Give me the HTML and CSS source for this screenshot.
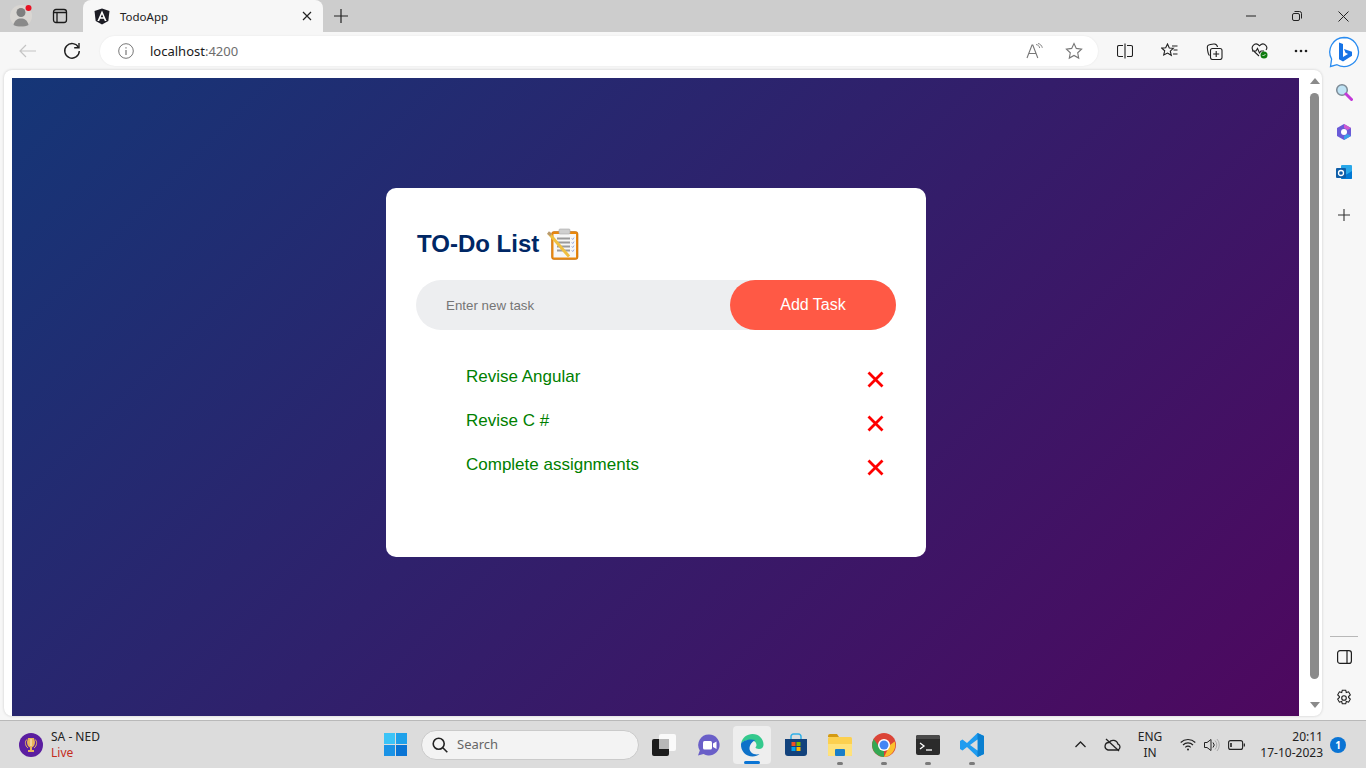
FILE: index.html
```html
<!DOCTYPE html>
<html>

<head>
	<meta charset="utf-8">
	<title>TodoApp</title>
	<link rel="stylesheet" href="styles.css">
</head>

<body>
	<!-- browser tabs -->
	<div class="tabBar">
		<div class="slot avatarSlot">
			<svg width="28" height="28" viewBox="0 0 28 28"><circle cx="13" cy="15" r="11" fill="#d9d6d2"/><circle cx="13" cy="11.500" r="4.500" fill="#7f7f7f"/><path d="M5.500 24c1-5 4-6.500 7.500-6.500s6.500 1.500 7.500 6.500c-4 2-11 2-15 0z" fill="#8a8a8a"/><circle cx="20.500" cy="7" r="3" fill="#e81123"/></svg>
		</div>
		<div class="slot tabsIcon">
			<svg width="16" height="16" viewBox="0 0 16 16" fill="none" stroke="#1a1a1a" stroke-width="1.300"><rect x="1.500" y="1.500" width="13" height="13" rx="2.500"/><path d="M1.500 4.500h13M5 4.500v10"/></svg>
		</div>
		<div class="tab">
			<svg class="tabLogo" width="16" height="17" viewBox="0 0 16 17"><path d="M8 .5 15.500 3l-1.200 10L8 16.500 1.700 13 .5 3z" fill="#1c1c24"/><path d="M8 2.500 3.400 13h1.800l.9-2.300h3.800l.9 2.300h1.800zM8 6.300l1.300 3H6.700z" fill="#fff"/></svg>
			<span class="tabTitle">TodoApp</span>
			<svg width="12" height="12" viewBox="0 0 12 12" stroke="#222" stroke-width="1.200"><path d="M2 2l8 8M10 2l-8 8"/></svg>
		</div>
		<div class="slot plusSlot">
			<svg width="14" height="14" viewBox="0 0 14 14" stroke="#222" stroke-width="1.200"><path d="M7 0v14M0 7h14"/></svg>
		</div>
		<div class="windowBtns">
			<div class="winBtn"><svg width="10" height="10" viewBox="0 0 10 10" stroke="#222"><path d="M0 5h10"/></svg></div>
			<div class="winBtn"><svg width="10" height="10" viewBox="0 0 10 10" fill="none" stroke="#222"><rect x=".5" y="2.500" width="7" height="7" rx="1.500"/><path d="M2.500 .5h5a2 2 0 0 1 2 2v5"/></svg></div>
			<div class="winBtn"><svg width="11" height="11" viewBox="0 0 11 11" stroke="#222"><path d="M.5 .5l10 10M10.500 .5l-10 10"/></svg></div>
		</div>
	</div>

	<!-- address bar -->
	<div class="toolBar">
		<div class="slot backSlot">
			<svg width="18" height="14" viewBox="0 0 18 14" fill="none" stroke="#c4c4c4" stroke-width="1.200"><path d="M1 7h16M7 1 1 7l6 6"/></svg>
		</div>
		<div class="slot refreshSlot">
			<svg width="18" height="18" viewBox="0 0 18 18" fill="none" stroke="#1f1f1f" stroke-width="1.400"><path d="M15.500 5.500A7.300 7.300 0 1 0 16.300 9"/><path d="M16 1v4.800h-4.800"/></svg>
		</div>
		<div class="addressPill">
			<svg class="infoIcon" width="16" height="16" viewBox="0 0 16 16" fill="none" stroke="#777"><circle cx="8" cy="8" r="7.300"/><path d="M8 7v5M8 4.200v1.300" stroke-width="1.200"/></svg>
			<span class="url">localhost<span class="urlPort">:4200</span></span>
			<div class="pillIcons">
				<svg width="17" height="16" viewBox="0 0 17 16" fill="none" stroke="#777" stroke-width="1.100"><path d="M1 15 6 2h.8l5 13M3 10.500h7"/><path d="M10 1.500c2 .3 3.300 1.500 3.700 3.500M12 .5c2.300.5 3.800 2 4.300 4.300" stroke-width=".9"/></svg>
				<svg width="18" height="18" viewBox="0 0 18 18" fill="none" stroke="#777" stroke-width="1.100"><path d="m9 1.500 2.300 4.900 5.300.7-3.900 3.700 1 5.300L9 13.500l-4.700 2.600 1-5.300-3.900-3.700 5.300-.7z"/></svg>
			</div>
		</div>
		<div class="toolIcons">
			<div class="toolIcon"><svg width="16" height="16" viewBox="0 0 16 16" fill="none" stroke="#1f1f1f" stroke-width="1.100"><path d="M6 2.500H2A1.500 1.500 0 0 0 .5 4v8A1.500 1.500 0 0 0 2 13.500h4M10 2.500h4A1.500 1.500 0 0 1 15.500 4v8a1.500 1.500 0 0 1-1.500 1.500h-4M8 .5v15"/></svg></div>
			<div class="toolIcon"><svg width="17" height="16" viewBox="0 0 17 16" fill="none" stroke="#1f1f1f" stroke-width="1.100"><path d="m6.500 1 1.800 4 4 .3-3 2.800 1 4.200-3.800-2.200L2.700 12l1-4.200-3-2.700 4-.4zM11 3h5.500M12.500 7H16.500M12 11h4.500"/></svg></div>
			<div class="toolIcon"><svg width="17" height="17" viewBox="0 0 17 17" fill="none" stroke="#1f1f1f" stroke-width="1.100"><path d="M3.500 12.500C1.800 11.500 1 4 1.500 3c.5-1.200 5-2.300 7-2 1.500.2 2.800 2 3 3"/><rect x="4.500" y="5.500" width="11.500" height="11" rx="2"/><path d="M10.200 8v6M7.200 11h6"/></svg></div>
			<div class="toolIcon"><svg width="18" height="18" viewBox="0 0 18 18"><path d="M8 14 2 8.300C-.5 5 3.500.5 7 2.500l1.500 1.300L10 2.500c3.500-2 7.500 2.500 5 5.500M1 9h4l1.500-2.500 2 4.500L10 9h3" fill="none" stroke="#1f1f1f" stroke-width="1.100"/><circle cx="13" cy="13" r="3.500" fill="#107c10"/><path d="m11.500 13 1 1 2-2" fill="none" stroke="#fff" stroke-width=".8"/></svg></div>
			<div class="toolIcon menuDots"><svg width="14" height="4" viewBox="0 0 14 4" fill="#1f1f1f"><circle cx="2" cy="2" r="1.300"/><circle cx="7" cy="2" r="1.300"/><circle cx="12" cy="2" r="1.300"/></svg></div>
			<div class="toolIcon bingIcon"><svg width="32" height="32" viewBox="0 0 32 32"><path d="M16 1.500a14.500 14.500 0 1 1-7 27.200L2.500 30.500 3.600 23A14.500 14.500 0 0 1 16 1.500z" fill="#fff" stroke="#2a8cf0" stroke-width="1.300"/><path d="M11 6.500l4 1.400v13l5-2.900-2.500-1.200-1.500-3.800 8 2.800v4L15 25.500l-4-2.200z" fill="#1673e6"/></svg></div>
		</div>
	</div>

	<div class="browserBody">
		<div class="viewport">
			<div class="page">
				<div class="card">
					<h2 class="cardTitle">TO-Do List
						<svg class="clipboard" width="32" height="32" viewBox="0 0 32 32">
							<rect x="4.500" y="3.500" width="26.500" height="28" rx="2.500" fill="#e8870e" stroke="#c0690a" stroke-width=".6"/>
							<rect x="6.500" y="6" width="22.500" height="23.500" fill="#f7f7f7"/>
							<rect x="12" y="1" width="11" height="5" rx="1" fill="#cfcfcf" stroke="#aaa" stroke-width=".6"/>
							<path d="M10 10.500h13M10 14.500h13M10 18.500h13M10 22.500h13" stroke="#9a9a9a" stroke-width="2"/>
							<path d="M24.500 10.500l1.500 1 1-2M24.500 14.500l1.500 1 1-2M24.500 18.500l1.500 1 1-2M24.500 22.500l1.500 1 1-2" fill="none" stroke="#8f9fd8" stroke-width=".8"/>
							<path d="M1.500 5 22 28.500" stroke="#f0c040" stroke-width="3"/>
							<path d="M1 4.500 4 7" stroke="#b89a70" stroke-width="3"/>
						</svg>
					</h2>
					<div class="inputRow">
						<input class="taskInput" type="text" placeholder="Enter new task">
						<button class="addBtn">Add Task</button>
					</div>
					<ul class="taskList">
						<li class="taskItem">
							<span class="taskText">Revise Angular</span>
							<svg class="delIcon" width="17" height="17" viewBox="0 0 17 17" stroke="#f00" stroke-width="2.800"><path d="M1.500 1.500l14 14M15.500 1.500l-14 14"/></svg>
						</li>
						<li class="taskItem">
							<span class="taskText">Revise C #</span>
							<svg class="delIcon" width="17" height="17" viewBox="0 0 17 17" stroke="#f00" stroke-width="2.800"><path d="M1.500 1.500l14 14M15.500 1.500l-14 14"/></svg>
						</li>
						<li class="taskItem">
							<span class="taskText">Complete assignments</span>
							<svg class="delIcon" width="17" height="17" viewBox="0 0 17 17" stroke="#f00" stroke-width="2.800"><path d="M1.500 1.500l14 14M15.500 1.500l-14 14"/></svg>
						</li>
					</ul>
				</div>
			</div>
			<div class="scrollBar">
				<div class="arrowUp"></div>
				<div class="thumb"></div>
				<div class="arrowDown"></div>
			</div>
		</div>

		<div class="sideBar">
			<div class="sideIcon"><svg width="18" height="18" viewBox="0 0 18 18"><circle cx="7" cy="7" r="5.300" fill="#bfe3f5" stroke="#7d8b96" stroke-width="1.500"/><path d="m11 11 5.500 5.500" stroke="#c239d8" stroke-width="3" stroke-linecap="round"/></svg></div>
			<div class="sideIcon"><svg width="18" height="18" viewBox="0 0 18 18"><path d="M9 1l7 4v8l-7 4-7-4V5z" fill="#6a5bd8"/><path d="M9 1l7 4-3.500 2L9 5z" fill="#d05ad0"/><path d="M16 13l-7 4v-4l3.500-2z" fill="#3ba0e8"/><circle cx="9" cy="9" r="3" fill="#fff"/></svg></div>
			<div class="sideIcon"><svg width="18" height="18" viewBox="0 0 18 18"><rect x="6" y="2" width="11" height="14" rx="1" fill="#28a8ea"/><path d="M6 8l5.500 3.500L17 8v7a1 1 0 0 1-1 1H7a1 1 0 0 1-1-1z" fill="#0078d4"/><rect x="1" y="5" width="10" height="10" rx="1" fill="#0f5ea8"/><circle cx="6" cy="10" r="2.500" fill="none" stroke="#fff" stroke-width="1.300"/></svg></div>
			<div class="sideIcon plusIcon"><svg width="14" height="14" viewBox="0 0 14 14" stroke="#333" stroke-width="1.100"><path d="M7 1v12M1 7h12"/></svg></div>
			<div class="sideBottom">
				<div class="sideRule"></div>
				<div class="sideIcon"><svg width="15" height="14" viewBox="0 0 15 14" fill="none" stroke="#1f1f1f" stroke-width="1.200"><rect x=".6" y=".6" width="13.800" height="12.800" rx="2.500"/><path d="M10 .6v12.800"/></svg></div>
				<div class="sideIcon"><svg width="18" height="18" viewBox="0 0 18 18" fill="none" stroke="#1f1f1f" stroke-width="1.100"><path d="M7.300 1.200h3.400l.6 2.300 2.300-.7 1.700 3-1.700 1.700v1l1.700 1.700-1.700 3-2.300-.7-.6 2.300H7.300l-.6-2.300-2.300.7-1.700-3 1.700-1.700v-1L2.700 5.800l1.700-3 2.300.7z"/><circle cx="9" cy="9" r="2.300"/></svg></div>
			</div>
		</div>
	</div>

	<!-- windows taskbar -->
	<div class="taskBar">
		<div class="weather">
			<svg width="24" height="24" viewBox="0 0 24 24"><circle cx="12" cy="12" r="12" fill="#5b1ea0"/><path d="M9 5h6l1 4c0 3-1.500 5-3 5.500V17h2v2H9v-2h2v-2.500C9.500 14 8 12 8 9z" fill="#e8b45a"/><path d="M8 6.500C5.500 8 6 13 9 15M16 6.500c2.500 1.500 2 6.500-1 8.500" fill="none" stroke="#e8b45a"/><path d="M12 6v7" stroke="#fff" stroke-width=".8"/></svg>
			<div class="weatherText">
				<div>SA - NED</div>
				<div class="liveText">Live</div>
			</div>
		</div>
		<div class="taskSlot">
			<svg width="23" height="23" viewBox="0 0 23 23"><rect width="11" height="11" fill="#3cc4f7"/><rect x="12" width="11" height="11" fill="#1fa1ea"/><rect y="12" width="11" height="11" fill="#1a93e6"/><rect x="12" y="12" width="11" height="11" fill="#0a74d4"/></svg>
		</div>
		<div class="searchBox">
			<svg width="16" height="16" viewBox="0 0 16 16" fill="none" stroke="#222" stroke-width="1.600"><circle cx="6.700" cy="6.700" r="5.500"/><path d="m10.800 10.800 4.500 4.500"/></svg>
			<span class="searchLabel">Search</span>
		</div>
		<div class="taskSlot">
			<svg width="24" height="22" viewBox="0 0 24 22"><rect x="7" y="0" width="17" height="17" rx="2" fill="#fafafa"/><rect x="0" y="5" width="17" height="17" rx="2" fill="#1c1c1c"/><rect x="7" y="5" width="10" height="10" fill="#b8b8b8"/></svg>
		</div>
		<div class="taskSlot">
			<svg width="24" height="24" viewBox="0 0 24 24"><path d="M13 1.500a10.500 10.500 0 1 1-5.500 19.400L2 22.500l1.800-5A10.500 10.500 0 0 1 13 1.500z" fill="#6a5fc8"/><rect x="7" y="8" width="9" height="8.500" rx="1.500" fill="#fff"/><path d="M17 10.500l3.500-2v7.500L17 14z" fill="#fff"/></svg>
		</div>
		<div class="taskSlot">
			<div class="activeTile">
				<svg width="24" height="24" viewBox="0 0 24 24"><path d="M1 11C2 4.500 7 1 12.500 1 19 1 23.500 6 23.500 11.500c0 3-2 4.500-4.500 4.500-2 0-3.500-.8-3.500-1.500 0-.5 1-1 1-2.500 0-3-3-5-6-5C6 7 1.500 9 1 11z" fill="#34c98d"/><path d="M1 11C.5 18 6 23.500 12.500 23.500c3 0 5.500-1 7-2.500-5 1.500-10-1.500-10-5.500 0-3.500 2.500-7 6-8.500C8 5 1.500 8.500 1 11z" fill="#0f72c9"/></svg>
				<div class="activeMark"></div>
			</div>
		</div>
		<div class="taskSlot">
			<svg width="24" height="24" viewBox="0 0 24 24"><path d="M7 6V3.500A2.500 2.500 0 0 1 9.500 1h5A2.500 2.500 0 0 1 17 3.500V6" fill="none" stroke="#30b0e8" stroke-width="1.500"/><path d="M1 6h22v14a3 3 0 0 1-3 3H4a3 3 0 0 1-3-3z" fill="#12427c"/><rect x="7.500" y="9" width="4" height="4" fill="#f25022"/><rect x="12.500" y="9" width="4" height="4" fill="#7fba00"/><rect x="7.500" y="14" width="4" height="4" fill="#00a4ef"/><rect x="12.500" y="14" width="4" height="4" fill="#ffb900"/></svg>
		</div>
		<div class="taskSlot">
			<svg width="24" height="22" viewBox="0 0 24 22"><path d="M0 2a2 2 0 0 1 2-2h7l2 3h-11z" fill="#d49a12"/><rect y="3" width="24" height="19" rx="1.500" fill="#fcd04f"/><path d="M0 10h24v10.500a1.500 1.500 0 0 1-1.500 1.500h-21A1.500 1.500 0 0 1 0 20.500z" fill="#ffe27a"/><rect x="7" y="15" width="10" height="7" rx="1" fill="#1a7fc8"/></svg>
			<div class="runDot"></div>
		</div>
		<div class="taskSlot">
			<svg width="24" height="24" viewBox="0 0 24 24"><circle cx="12" cy="12" r="12" fill="#db4437"/><path d="M12 24 18 12l4.700-3.600A12 12 0 0 1 12 24z" fill="#fbc02d"/><path d="M12 24A12 12 0 0 1 1.700 6L7 13.500 12 18z" fill="#34a853"/><circle cx="12" cy="12" r="6" fill="#fff"/><circle cx="12" cy="12" r="4.500" fill="#4285f4"/></svg>
			<div class="runDot"></div>
		</div>
		<div class="taskSlot">
			<svg width="24" height="20" viewBox="0 0 24 20"><rect width="24" height="20" rx="2" fill="#2b2b2b"/><path d="M0 2a2 2 0 0 1 2-2h20a2 2 0 0 1 2 2v2H0z" fill="#4a4a4a"/><path d="M4 8l4 3-4 3" fill="none" stroke="#fff" stroke-width="1.300"/><path d="M10 15h6" stroke="#fff" stroke-width="1.300"/></svg>
			<div class="runDot"></div>
		</div>
		<div class="taskSlot">
			<svg width="24" height="24" viewBox="0 0 24 24"><path d="M17.500 0 24 3v18l-6.500 3L7 14l-4.500 3.500L0 16V8l2.500-1.500L7 10z" fill="#1f9cf0"/><path d="M17.500 0 24 3v18l-6.500 3z" fill="#0a7fd0"/><path d="M17.500 6.500 10 12l7.500 5.500z" fill="#dcdcdc"/></svg>
			<div class="runDot"></div>
		</div>

		<div class="tray">
			<svg class="trayChevron" width="11" height="7" viewBox="0 0 11 7" fill="none" stroke="#222" stroke-width="1.300"><path d="m.5 6 5-5 5 5"/></svg>
			<svg class="trayCloud" width="17" height="14" viewBox="0 0 17 14" fill="none" stroke="#222" stroke-width="1.300"><path d="M4 12h9a3 3 0 0 0 1-5.800A5 5 0 0 0 5 4.500 3.800 3.800 0 0 0 4 12z"/><path d="M2 1l13 12"/></svg>
			<div class="trayLang">ENG<br>IN</div>
			<svg class="trayWifi" width="16" height="13" viewBox="0 0 16 13" fill="none" stroke="#222" stroke-width="1.100"><path d="M.7 4.500a10.500 10.500 0 0 1 14.600 0M3 7a7 7 0 0 1 10 0M5.300 9.300a3.800 3.800 0 0 1 5.400 0"/><circle cx="8" cy="11.500" r="1" fill="#222" stroke="none"/></svg>
			<svg class="traySound" width="16" height="14" viewBox="0 0 16 14" fill="none" stroke="#222" stroke-width="1"><path d="M.5 4.500h2.500L7 1.500v11l-4-3H.5z"/><path d="M9 4.500a3.500 3.500 0 0 1 0 5"/><path d="M11 2.500a6.500 6.500 0 0 1 0 9M13 1a9 9 0 0 1 0 12" stroke="#aaa"/></svg>
			<svg class="trayBattery" width="17" height="10" viewBox="0 0 17 10" fill="none" stroke="#222" stroke-width="1.100"><rect x=".6" y=".6" width="14" height="8.800" rx="2"/><path d="M3 3v4" stroke-width="1.600"/><path d="M16.300 3.500v3" stroke-width="1.300"/></svg>
			<div class="trayClock">20:11<br>17-10-2023</div>
			<div class="trayBadge">1</div>
		</div>
	</div>
</body>

</html>
```

FILE: styles.css
```css
* {
	box-sizing: border-box;
}

html,
body {
	margin: 0;
	height: 768px;
	overflow: hidden;
}

body {
	display: flex;
	flex-direction: column;
	width: 1366px;
	background-color: #f7f7f7;
	font-family: "Noto Sans", sans-serif;
}

svg {
	display: block;
	flex: none;
}

.slot,
.winBtn,
.toolIcon,
.sideIcon,
.taskSlot {
	display: flex;
	align-items: center;
	justify-content: center;
}

/* tab strip */
.tabBar {
	display: flex;
	align-items: center;
	height: 32px;
	background-color: #cdcdcd;
}

.avatarSlot {
	width: 44px;
	margin-top: -3px;
}

.tabsIcon {
	width: 32px;
}

.tab {
	display: flex;
	align-items: center;
	width: 240px;
	height: 32px;
	margin-left: 7px;
	padding: 0 10px 0 11px;
	background-color: #f7f7f7;
	border-radius: 8px 8px 0 0;
}

.tabTitle {
	flex: 1;
	margin-left: 10px;
	font-size: 11.5px;
	color: #222;
}

.plusSlot {
	width: 36px;
}

.windowBtns {
	display: flex;
	margin-left: auto;
}

.winBtn {
	width: 46px;
	height: 32px;
}

/* address bar */
.toolBar {
	display: flex;
	align-items: center;
	height: 38px;
	background-color: #f7f7f7;
}

.backSlot {
	flex: none;
	width: 56px;
}

.refreshSlot {
	flex: none;
	width: 32px;
}

.addressPill {
	display: flex;
	align-items: center;
	flex: none;
	width: 998px;
	height: 30px;
	margin-left: 12px;
	padding: 0 15px 0 18px;
	background-color: #fff;
	border-radius: 15px;
	box-shadow: 0 0 2px rgba(0, 0, 0, 0.08);
}

.url {
	margin-left: 16px;
	font-size: 13px;
	color: #1a1a1a;
}

.urlPort {
	color: #6d6d6d;
}

.pillIcons {
	display: flex;
	align-items: center;
	gap: 22px;
	margin-left: auto;
}

.toolIcons {
	display: flex;
	align-items: center;
	flex: 1;
	padding-left: 4px;
}

.toolIcon {
	flex: none;
	width: 45px;
}

.menuDots {
	width: 37px;
}

.bingIcon {
	width: 44px;
	margin-left: 3px;
	margin-top: 2px;
}

/* window content */
.browserBody {
	display: flex;
	height: 646px;
	padding-left: 4px;
}

.viewport {
	display: flex;
	width: 1318px;
	padding: 8px 0 0 8px;
	background-color: #fff;
	border-radius: 8px;
	box-shadow: 0 0 3px rgba(0, 0, 0, 0.18);
}

.page {
	display: flex;
	justify-content: center;
	align-items: flex-start;
	width: 1287px;
	padding-top: 110px;
	padding-left: 1px;
	background: linear-gradient(135deg, #153677, #4e085f);
}

.card {
	width: 540px;
	height: 369px;
	padding: 40px 30px 0;
	background-color: #fff;
	border-radius: 10px;
}

.cardTitle {
	display: flex;
	align-items: center;
	gap: 8px;
	height: 32px;
	margin: 0 0 20px 1px;
	font-family: "Liberation Sans", sans-serif;
	font-size: 24px;
	font-weight: bold;
	color: #002765;
}

.inputRow {
	display: flex;
	align-items: center;
	height: 50px;
	background-color: #edeef0;
	border-radius: 30px;
}

.taskInput {
	flex: 1;
	min-width: 0;
	padding: 10px 0 10px 30px;
	border: 0;
	outline: 0;
	background: transparent;
	font-family: "Liberation Sans", sans-serif;
	font-size: 13.33px;
}

.addBtn {
	width: 166px;
	height: 50px;
	border: 0;
	border-radius: 40px;
	background-color: #ff5945;
	font-family: "Liberation Sans", sans-serif;
	font-size: 16px;
	color: #fff;
}

.taskList {
	margin: 27px 0 0;
	padding: 0;
	list-style: none;
}

.taskItem {
	display: flex;
	align-items: center;
	justify-content: space-between;
	height: 44px;
	padding: 0 12px 0 50px;
}

.taskText {
	margin-top: -5px;
	font-family: "Liberation Sans", sans-serif;
	font-size: 17px;
	color: #008000;
}

.scrollBar {
	display: flex;
	flex-direction: column;
	align-items: center;
	width: 23px;
	padding: 0 0 8px 8px;
}

.arrowUp {
	width: 0;
	height: 0;
	margin-bottom: 9px;
	border-left: 5px solid transparent;
	border-right: 5px solid transparent;
	border-bottom: 6px solid #8a8a8a;
}

.thumb {
	flex: 1;
	width: 9px;
	background-color: #8b8b8b;
	border-radius: 5px;
}

.arrowDown {
	width: 0;
	height: 0;
	margin-top: 23px;
	border-left: 5px solid transparent;
	border-right: 5px solid transparent;
	border-top: 6px solid #8a8a8a;
}

/* right edge icons */
.sideBar {
	display: flex;
	flex-direction: column;
	width: 44px;
	padding-top: 1px;
}

.sideIcon {
	height: 40px;
}

.sideIcon:first-child {
	height: 41px;
}

.plusIcon {
	margin-top: 3px;
}

.sideBottom {
	margin-top: auto;
	margin-bottom: -2px;
}

.sideRule {
	height: 1px;
	margin: 0 8px;
	background-color: #b8b8b8;
}

.sideBottom .sideIcon {
	height: 40px;
}

.sideBottom .sideIcon:last-child {
	height: 41px;
}

/* windows taskbar */
.taskBar {
	display: flex;
	align-items: center;
	height: 48px;
	margin-top: 4px;
	border-top: 1px solid #b9b9b9;
	background-color: #dcdcdc;
}

.weather {
	display: flex;
	align-items: center;
	gap: 8px;
	width: 373px;
	padding-left: 19px;
	font-size: 12px;
	line-height: 16px;
	color: #222;
}

.liveText {
	color: #c42b1c;
}

.taskSlot {
	position: relative;
	width: 44px;
	height: 47px;
	flex: none;
}

.activeTile {
	display: flex;
	align-items: center;
	justify-content: center;
	position: relative;
	width: 38px;
	height: 38px;
	background-color: #eeeeee;
	border-radius: 4px;
}

.activeMark {
	position: absolute;
	left: 11px;
	bottom: 0;
	width: 16px;
	height: 3px;
	background-color: #0a74d4;
	border-radius: 2px;
}

.runDot {
	position: absolute;
	left: 19px;
	bottom: 3px;
	width: 6px;
	height: 3px;
	background-color: #7a7a7a;
	border-radius: 2px;
}

.searchBox {
	display: flex;
	align-items: center;
	gap: 9px;
	width: 218px;
	height: 30px;
	margin-left: 4px;
	margin-right: 3px;
	padding-left: 10px;
	background-color: #f3f3f3;
	border: 1px solid #cacaca;
	border-radius: 15px;
	font-size: 13px;
	color: #666;
}

.searchLabel {
	margin-top: -2px;
}

.tray {
	display: flex;
	align-items: center;
	flex: 1;
	padding-left: 81px;
	font-size: 12px;
	color: #222;
}

.trayCloud {
	margin-left: 18px;
}

.trayLang {
	width: 40px;
	margin-left: 9px;
	line-height: 16px;
	text-align: center;
}

.trayWifi {
	margin-left: 10px;
}

.traySound {
	margin-left: 8px;
}

.trayBattery {
	margin-left: 8px;
}

.trayClock {
	width: 78px;
	line-height: 16px;
	text-align: right;
}

.trayBadge {
	width: 16px;
	height: 16px;
	margin-left: 7px;
	background-color: #0a74d4;
	border-radius: 50%;
	font-size: 10px;
	font-weight: bold;
	line-height: 16px;
	text-align: center;
	color: #fff;
}
```
